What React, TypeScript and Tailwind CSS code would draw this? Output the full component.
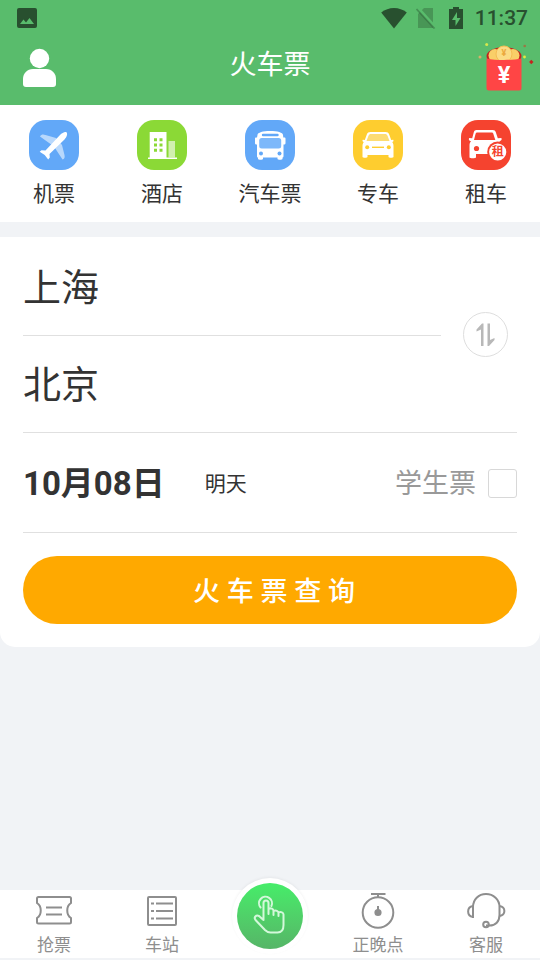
import React from "react";
import clsx from "clsx";

const services = [
    { key: "flight", label: "机票", color: "bg-[#62a8f8]", icon: <PlaneIcon /> },
    { key: "hotel", label: "酒店", color: "bg-[#8bd936]", icon: <HotelIcon /> },
    { key: "bus", label: "汽车票", color: "bg-[#62a8f8]", icon: <BusIcon /> },
    { key: "taxi", label: "专车", color: "bg-[#fecd2f]", icon: <TaxiIcon /> },
    { key: "rental", label: "租车", color: "bg-[#f5432f]", icon: <RentalIcon /> },
]

export default function App() {
    return (
        <div className="min-h-screen flex flex-col bg-[#f1f3f6] text-[#333] font-['Roboto','Noto_Sans_CJK_SC',sans-serif]">
            <header className="bg-[#59bc6c]">
                <StatusBar />
                <TitleBar />
            </header>

            <main className="flex-1 flex flex-col gap-[15px]">
                <nav className="grid grid-cols-5 bg-white pt-[15px] pb-3">
                    {services.map(({ key, label, color, icon }) => (
                        <a key={key} href={"#" + key} className="flex flex-col items-center gap-2">
                            <span className={clsx("size-[50px] rounded-[17px]", color)}>{icon}</span>
                            <span className="text-[21px] leading-8">{label}</span>
                        </a>
                    ))}
                </nav>

                <SearchForm />
            </main>

            <BottomNav />
        </div>
    )
}

function StatusBar() {
    return (
        <div className="h-9 flex items-center justify-between pl-[17px] pr-3 text-[#28502f]">
            <svg className="size-5" viewBox="0 0 20 20" fill="currentColor">
                <path fillRule="evenodd" d="M2 0h16a2 2 0 0 1 2 2v16a2 2 0 0 1-2 2H2a2 2 0 0 1-2-2V2a2 2 0 0 1 2-2zM3 16h14l-4.5-6-3.5 4.6-2.5-3z" />
            </svg>

            <div className="flex items-center">
                <svg className="w-[26px] h-[22px]" viewBox="0 0 26 22" fill="currentColor">
                    <path d="M13 21.5L.2 5.5C4 2.500 8.200 1 13 1s9 1.500 12.800 4.500z" />
                </svg>
                <svg className="w-5 h-[22px] ml-[9px]" viewBox="0 0 20 22">
                    <path d="M8 1h9v20H2V7z" fill="currentColor" opacity=".35" />
                    <path d="M2 1L20 21" stroke="#59bc6c" strokeWidth="3" />
                    <path d="M.5 2L18.500 21.500" stroke="currentColor" strokeWidth="1.800" opacity=".4" />
                </svg>
                <svg className="w-[14px] h-[22px] ml-[13px]" viewBox="0 0 14 22" fill="currentColor">
                    <path fillRule="evenodd" d="M4 0h6v2h4v20H0V2h4zM8 5l-5 8h3.500v6l5-8H8z" />
                </svg>
                <span className="ml-3 text-[21px] leading-6 font-medium">11:37</span>
            </div>
        </div>
    )
}

function TitleBar() {
    return (
        <div className="grid grid-cols-3 items-center h-[69px] text-white">
            <button type="button" aria-label="我的" className="justify-self-start pl-[23px] pb-[7px]">
                <svg className="w-[34px] h-10" viewBox="0 0 34 40" fill="currentColor">
                    <circle cx="16.5" cy="11.5" r="9.7" />
                    <path d="M10 22h13c6 0 10 4.500 10 10v5a3 3 0 0 1-3 3H3a3 3 0 0 1-3-3v-5c0-5.500 4-10 10-10z" />
                </svg>
            </button>
            <h1 className="pb-[11px] text-center text-[27px] leading-8">火车票</h1>
            <button type="button" aria-label="红包" className="justify-self-end pr-[6px] pb-[11px]">
                <RedPacketIcon />
            </button>
        </div>
    )
}

function SearchForm() {
    const [from, setFrom] = React.useState("上海")
    const [to, setTo] = React.useState("北京")
    const [student, setStudent] = React.useState(false)

    const swap = () => {
        setFrom(to)
        setTo(from)
    }

    return (
        <form className="bg-white rounded-b-[15px] px-[23px] pb-[23px]" onSubmit={(e) => e.preventDefault()}>
            <div className="grid grid-cols-[1fr_76px] border-b border-[#e0e0e0]">
                <button type="button" className="h-[99px] pt-1 border-b border-[#e0e0e0] text-left text-[38px] leading-[48px]">{from}</button>
                <button
                type="button"
                aria-label="交换"
                onClick={swap}
                className="row-span-2 self-center ml-[22px] size-[45px] rounded-full border border-[#dedede]"
                >
                    <svg className="size-full" viewBox="0 0 43 43" fill="#b8b8b8">
                        <path d="M19.500 10.500V33H17V16.500l-4.500 2v-2l5.500-6zM23.500 33V10.500H26V27l4.500-2v2L25 33z" />
                    </svg>
                </button>
                <button type="button" className="h-24 pt-[2px] text-left text-[38px] leading-[48px]">{to}</button>
            </div>

            <div className="h-[100px] pt-[2px] flex items-center justify-between border-b border-[#e0e0e0]">
                <button type="button" className="flex items-center gap-10">
                    <span className="text-[33px] leading-10 font-bold">10月08日</span>
                    <span className="text-[21px] leading-8">明天</span>
                </button>
                <label className="flex items-center gap-3 text-[27px] leading-8 text-[#999]">
                    学生票
                    <input
                    type="checkbox"
                    checked={student}
                    onChange={(e) => setStudent(e.target.checked)}
                    className="appearance-none size-[29px] rounded-[3px] border border-[#d8d8d8] bg-white checked:bg-[#59bc6c]"
                    />
                </label>
            </div>

            <button type="submit" className="mt-[23px] w-full h-[68px] pl-2 pt-1 rounded-full bg-[#ffa900] text-white text-[27px] leading-8 font-medium">
                火 车 票 查 询
            </button>
        </form>
    )
}

function BottomNav() {
    return (
        <nav className="grid grid-cols-5 h-[68px] mb-[2px] bg-white text-[#8e8e8e]">
            <NavItem href="#grab" label="抢票">
                <path d="M4.500 6h31c1 0 1.500.5 1.500 1.500V12c-5 3-5 12 0 15v4c0 1-.5 1.500-1.500 1.500h-31c-1 0-1.500-.5-1.500-1.500v-4c5-3 5-12 0-15V7.500C3 6.500 3.500 6 4.500 6z" />
                <path d="M12 16.500h16M12 23.500h16" />
            </NavItem>
            <NavItem href="#station" label="车站">
                <rect x="6" y="6" width="28" height="28" rx="1" />
                <path d="M9 12.500h3M14 12.500h17M9 20h3M14 20h17M9 27.500h3M14 27.500h17" />
            </NavItem>
            <div className="flex justify-center">
                <button type="button" aria-label="快捷" className="-mt-3 size-[76px] shrink-0 rounded-full bg-white p-[5px] shadow-[0_-1px_3px_rgba(0,0,0,0.05)]">
                    <span className="block size-[66px] rounded-full bg-linear-to-b from-[#45ed69] to-[#55b567]">
                        <svg className="size-full" viewBox="0 0 66 66" fill="none" stroke="#d3f8da" strokeWidth="2" strokeLinecap="round" strokeLinejoin="round">
                            <path d="M23.600 24.500a6.500 6.500 0 1 1 10.800-1.500" />
                            <path d="M26.500 37V20a2.500 2.500 0 0 1 5 0v11M31.500 26c2.500-1.500 5 0 5 2v4M36.500 28c2.500-1.200 5 0 5 2v3M41.500 29.500c2.500-1 5 0 5 2V42c0 4.500-2 7.500-6 7.500h-7c-2.500 0-4-1-5.500-2.500l-9.500-10c-2-2.500.5-5.500 3.500-4l4.500 4" />
                        </svg>
                    </span>
                </button>
            </div>
            <NavItem href="#delay" label="正晚点">
                <circle cx="20" cy="21.5" r="15.3" />
                <path d="M13 3h14.500M20 3v3M20 15v6" />
                <circle cx="20" cy="21.5" r="2.600" fill="currentColor" />
            </NavItem>
            <NavItem href="#service" label="客服">
                <path d="M7 27V16C7 8.500 12.500 3 20 3s13.500 5.500 13.500 13v8c0 6.500-4 10.500-10 10.500h-3.500" />
                <path d="M7 15c-6.500 1-6.500 10 0 11M33.500 15c6.500 1 6.500 9 0 10" />
                <circle cx="20" cy="33.5" r="2.800" />
            </NavItem>
        </nav>
    )
}

function NavItem({ href, label, children }: { href: string, label: string, children: React.ReactNode }) {
    return (
        <a href={href} className="flex flex-col items-center gap-[2px] pt-px">
            <svg className="size-10" viewBox="0 0 40 40" fill="none" stroke="currentColor" strokeWidth="2">{children}</svg>
            <span className="text-[17px] leading-6">{label}</span>
        </a>
    )
}

function PlaneIcon() {
    return (
        <svg viewBox="0 0 50 50" fill="#fff">
            <path opacity=".55" d="M11 16.500c1.500-2.500 3.500-2 5.500-1.500L27 18l6 7 2.500 10c.5 2.500 0 4-2 4.500L25 26.500z" />
            <path d="M37.500 12.300c1.500 2 0 5-2 7.200L20.500 34l.3 3.500-1.600 2-3.500-4.500-5-3.200 1.800-1.500 4 .2L31 15c2-2 5-3.700 6.500-2.700z" />
        </svg>
    )
}

function HotelIcon() {
    return (
        <svg viewBox="0 0 50 50" fill="#fff">
            <path d="M12.700 12h16.800v25.500H40V39H11v-1.500h1.700z" />
            <rect x="31.5" y="21" width="6.5" height="16.5" opacity=".6" />
            <path fill="#8bd936" d="M17 18.300h3v3h-3zM22.500 18.300h3v3h-3zM17 23.500h3v3h-3zM22.500 23.500h3v3h-3zM17 28.700h3v3h-3zM22.500 28.700h3v3h-3z" />
        </svg>
    )
}

function BusIcon() {
    return (
        <svg viewBox="0 0 50 50" fill="#fff">
            <path d="M12.500 15c0-2.500 5.500-4 12.700-4S38 12.500 38 15l.3 2.500h1.200c.6 0 1 .5 1 1V23c0 1-.5 1.500-2 1.500V36c0 1-.5 1.500-1 1.500V39c0 1-5 1-5 0v-1.500H18V39c0 1-5 1-5 0v-1.500c-.7 0-1-.5-1-1.500V24.500c-1.500 0-2-.5-2-1.500v-4.500c0-.5.4-1 1-1h1z" />
            <path fill="#62a8f8" d="M18 13.800h14.500a1.200 1.200 0 0 1 0 2.400H18a1.200 1.200 0 0 1 0-2.400z" />
            <rect x="14.2" y="18" width="22" height="10.5" rx="2.5" fill="#7db8fa" />
            <circle cx="16" cy="33.5" r="2" fill="#62a8f8" />
            <circle cx="34.5" cy="33.5" r="2" fill="#62a8f8" />
        </svg>
    )
}

function TaxiIcon() {
    return (
        <svg viewBox="0 0 50 50" fill="#fff">
            <path d="M17.500 12h15c2 0 3 .7 3.700 2.500l2 5.500 2-.3c.8 1.300 0 2-1 2.300 1 1.200 1.300 2.500 1.300 4V37c0 1-5 1-5 0v-2h-21v2c0 1-5 1-5 0V26c0-1.500.3-2.800 1.300-4-1-.3-1.800-1-1-2.300l2 .3 2-5.500c.7-1.800 1.700-2.500 3.700-2.500z" />
            <path fill="#fddc73" d="M18 14h14c1.300 0 2 .5 2.500 1.700l2 5.300h-23l2-5.300c.5-1.200 1.200-1.700 2.500-1.700z" />
            <circle cx="14.2" cy="27.3" r="2" fill="#fecd2f" />
            <circle cx="35.8" cy="27.3" r="2" fill="#fecd2f" />
            <path fill="#fecd2f" d="M19 26.600h12V28H19z" />
        </svg>
    )
}

function RentalIcon() {
    return (
        <svg viewBox="0 0 50 50">
            <path fill="#fff" d="M15.500 10h16.300c1.700 0 2.500.7 3 2.200l2 6 3.500-.2c1 1.500 0 2.700-2 3.200 1 1 1.500 2.300 1.500 4V34H15v3.500c0 1-6.500 1-6.500 0V25.500c0-1.700.3-3 1.500-4.300-2-.5-2.700-1.700-1.800-3.200l3 .2 1.600-6c.5-1.500 1.200-2.200 2.700-2.200z" />
            <path fill="#f5432f" d="M16.500 12.500h14c1 0 1.500.4 1.800 1.300l2 6.200H13l1.600-6.200c.3-.9.900-1.300 1.900-1.300z" />
            <circle cx="15.5" cy="28.5" r="2.6" fill="#f5432f" />
            <circle cx="36.7" cy="32" r="10.5" fill="#f5432f" />
            <circle cx="36.7" cy="32" r="8.6" fill="#fff" />
            <text x="36.7" y="36.3" textAnchor="middle" fontSize="12" fontWeight="700" fill="#f5432f">租</text>
        </svg>
    )
}

function RedPacketIcon() {
    return (
        <svg className="w-14 h-[54px]" viewBox="0 0 56 54">
            <ellipse cx="26" cy="18" rx="17.5" ry="9" fill="#c5201d" />
            <circle cx="17" cy="17.5" r="6.5" fill="#f9cf68" />
            <circle cx="35" cy="17.5" r="6.5" fill="#f9cf68" />
            <circle cx="26" cy="16" r="8" fill="#fbdb84" stroke="#f5bd52" />
            <text x="26" y="18" textAnchor="middle" fontSize="9" fontWeight="700" fill="#eba93c">¥</text>
            <path fill="#ff4545" d="M8.500 20.500c10 2 25 2 35 0V50a2.500 2.500 0 0 1-2.500 2.500H11A2.500 2.500 0 0 1 8.500 50z" />
            <text x="26" y="45" textAnchor="middle" fontFamily="Inter, sans-serif" fontSize="23" fontWeight="700" fill="#fff">¥</text>
            <circle cx="8.7" cy="6.5" r="1.5" fill="#d5e84d" />
            <circle cx="2" cy="19" r="1.5" fill="#d8b068" />
            <circle cx="46.7" cy="8" r="1.3" fill="#9b7645" />
            <circle cx="46.5" cy="19" r="1.4" fill="#e5e83f" />
            <path d="M53.300 21.800l2.200 2.200-2.200 2.200-2.200-2.200z" fill="#c5241f" />
        </svg>
    )
}
